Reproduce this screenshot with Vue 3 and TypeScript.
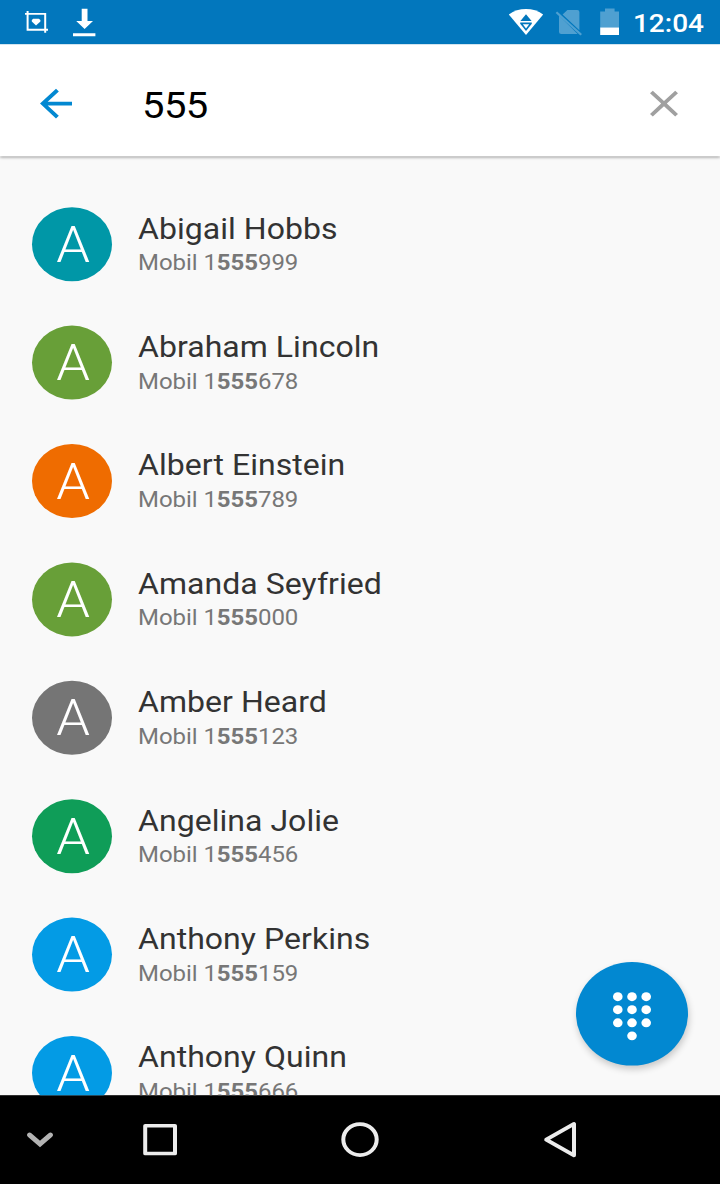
<script setup lang="ts">
interface Contact {
  name: string
  before: string
  after: string
  tone: string
}

const query = '555'
const contacts: Contact[] = [
  { name: 'Abigail Hobbs', before: '1', after: '999', tone: 'teal' },
  { name: 'Abraham Lincoln', before: '1', after: '678', tone: 'lime' },
  { name: 'Albert Einstein', before: '1', after: '789', tone: 'orange' },
  { name: 'Amanda Seyfried', before: '1', after: '000', tone: 'lime' },
  { name: 'Amber Heard', before: '1', after: '123', tone: 'gray' },
  { name: 'Angelina Jolie', before: '1', after: '456', tone: 'green' },
  { name: 'Anthony Perkins', before: '1', after: '159', tone: 'blue' },
  { name: 'Anthony Quinn', before: '1', after: '666', tone: 'blue' },
]
const keys: [number, number][] = [
  [-14.2, -18.5], [0, -18.5], [14.2, -18.5],
  [-14.2, -4.4], [0, -4.4], [14.2, -4.4],
  [-14.2, 9.7], [0, 9.7], [14.2, 9.7],
  [0, 23.8],
]
</script>

<template>
  <div class="viewport">
    <div class="screen">
      <header class="status">
        <svg class="status-left" width="120" height="48" viewBox="0 0 120 48">
          <g fill="none" stroke="#fff" stroke-width="2">
            <path d="M25 15H45.2V35.4M27.6 12V32.2H48" />
          </g>
          <path fill="#fff" d="M36 27.6L31.8 23.2V21.6L33.2 20.4H38.8L40.4 21.6V23.2Z" />
          <path fill="#fff" d="M81.7 9.4h5.8v13.3H93L84.6 31.4 76.2 22.7h5.5zM73 36h22.4v3.2H73z" />
        </svg>
        <div class="status-right">
          <svg width="124" height="48" viewBox="504 0 124 48">
            <path fill="#fff" d="M508.8 15.6Q516.5 9.8 526 9.8T543.2 15.6L526 37.8Z" />
            <path fill="#0277bd" d="M526 15.4L531.6 22.8H520.4Z" />
            <path fill="#0277bd" d="M520.2 24.2h11.6v1.6L526 33.6 520.2 25.8z" />
            <path fill="#fff" d="M522.8 26.2h6.4L526 30.8z" />
            <path fill="#4fa0d1" d="M567.4 10.8H577.2Q579.4 10.8 579.4 13V32.6L562.6 15.6ZM559 16.8L577.6 36.8H561.2Q559 36.8 559 34.6Z" />
            <path stroke="#4fa0d1" stroke-width="2.2" d="M556.4 13.2L581.2 37.6" />
            <path fill="#4fa0d1" d="M600.2 12.4h4.8V9.2h9.6v3.2H619V30h-18.8z" />
            <path fill="#fff" d="M600.2 29.6H619v8.2h-18.8z" />
          </svg>
          <span class="clock">12:04</span>
        </div>
      </header>

      <div class="toolbar">
        <svg width="48" height="48" viewBox="0 0 24 24">
          <path fill="#0288d1" d="M20 11H7.83l5.59-5.59L12 4l-8 8 8 8 1.41-1.41L7.83 13H20v-2z" />
        </svg>
        <span class="query">{{ query }}</span>
        <svg width="48" height="48" viewBox="0 0 24 24">
          <path fill="#a0a0a0" d="M19 6.41L17.59 5 12 10.59 6.41 5 5 6.41 10.59 12 5 17.59 6.41 19 12 13.41 17.59 19 19 17.59 13.41 12z" />
        </svg>
      </div>

      <main class="results">
        <div v-for="c in contacts" :key="c.name" class="row">
          <div class="avatar" :class="c.tone"><span>{{ c.name[0] }}</span></div>
          <div class="info">
            <div class="name">{{ c.name }}</div>
            <div class="phone">Mobil {{ c.before }}<b>{{ query }}</b>{{ c.after }}</div>
          </div>
        </div>
        <div class="fab">
          <svg width="112" height="112" viewBox="-56 -56 112 112">
            <circle v-for="([x, y], i) in keys" :key="i" :cx="x" :cy="y" r="4.8" fill="#fff" />
          </svg>
        </div>
      </main>

      <nav class="navbar">
        <svg width="720" height="96" viewBox="0 1184 720 96" fill="none" stroke="#ececec" stroke-width="4" stroke-linejoin="round">
          <path stroke="#b3b3b3" stroke-width="5.2" stroke-linecap="round" stroke-linejoin="miter" d="M29.6 1227L40 1236.8L50.4 1227" />
          <rect x="145.2" y="1217" width="29.8" height="30" />
          <circle cx="360" cy="1232" r="16.7" />
          <path d="M574 1215V1249L546.2 1232Z" />
        </svg>
      </nav>
    </div>
  </div>
</template>

<style>
body {
  margin: 0;
  background: #000;
}
</style>

<style scoped>
.viewport {
  width: 720px;
  height: 1184px;
  overflow: hidden;
}
.screen {
  display: flex;
  flex-direction: column;
  width: 720px;
  height: 1280px;
  transform: scaleY(0.925);
  transform-origin: 0 0;
  background: #f9f9f9;
  font-family: Roboto, sans-serif;
}
svg {
  display: block;
  flex: none;
}
.status {
  display: flex;
  justify-content: space-between;
  flex: none;
  height: 48px;
  background: #0277bd;
}
.status-right {
  display: flex;
  padding-right: 16px;
}
.clock {
  width: 76px;
  text-align: right;
  font-size: 28px;
  font-weight: 500;
  line-height: 52px;
  color: #fff;
}
.toolbar {
  position: relative;
  z-index: 1;
  display: flex;
  align-items: center;
  flex: none;
  height: 121px;
  box-sizing: border-box;
  padding: 7px 32px 0 32px;
  background: #fff;
  box-shadow: 0 2px 3px rgba(0, 0, 0, 0.4);
}
.query {
  flex: 1;
  padding: 5px 0 0 62px;
  font-size: 40px;
  line-height: 48px;
  letter-spacing: -0.6px;
  color: #000;
}
.results {
  position: relative;
  flex: 1;
  min-height: 0;
  box-sizing: border-box;
  padding-top: 31px;
  overflow: hidden;
}
.row {
  display: flex;
  height: 128px;
  box-sizing: border-box;
  padding: 24px 32px;
}
.avatar {
  display: flex;
  justify-content: center;
  width: 80px;
  height: 80px;
  box-sizing: border-box;
  padding-left: 2px;
  border-radius: 50%;
  font-size: 54px;
  font-weight: 300;
  line-height: 81px;
  color: #fff;
}
.teal { background: #0097a7; }
.lime { background: #689f38; }
.orange { background: #ef6c00; }
.gray { background: #757575; }
.green { background: #0f9d58; }
.blue { background: #039be5; }
.info {
  padding: 4px 0 0 26px;
}
.name {
  font-size: 32px;
  line-height: 38px;
  letter-spacing: 0.04px;
  color: #333;
  white-space: nowrap;
}
.phone {
  margin-top: 4px;
  font-size: 24px;
  line-height: 28px;
  letter-spacing: -0.06px;
  color: #777;
  white-space: nowrap;
}
.phone b {
  font-weight: 700;
}
.fab {
  position: absolute;
  right: 32px;
  bottom: 32px;
  width: 112px;
  height: 112px;
  border-radius: 50%;
  background: #0288d1;
  box-shadow: 1px 4px 8px rgba(0, 0, 0, 0.2);
}
.navbar {
  flex: none;
  height: 96px;
  background: #000;
}
</style>
